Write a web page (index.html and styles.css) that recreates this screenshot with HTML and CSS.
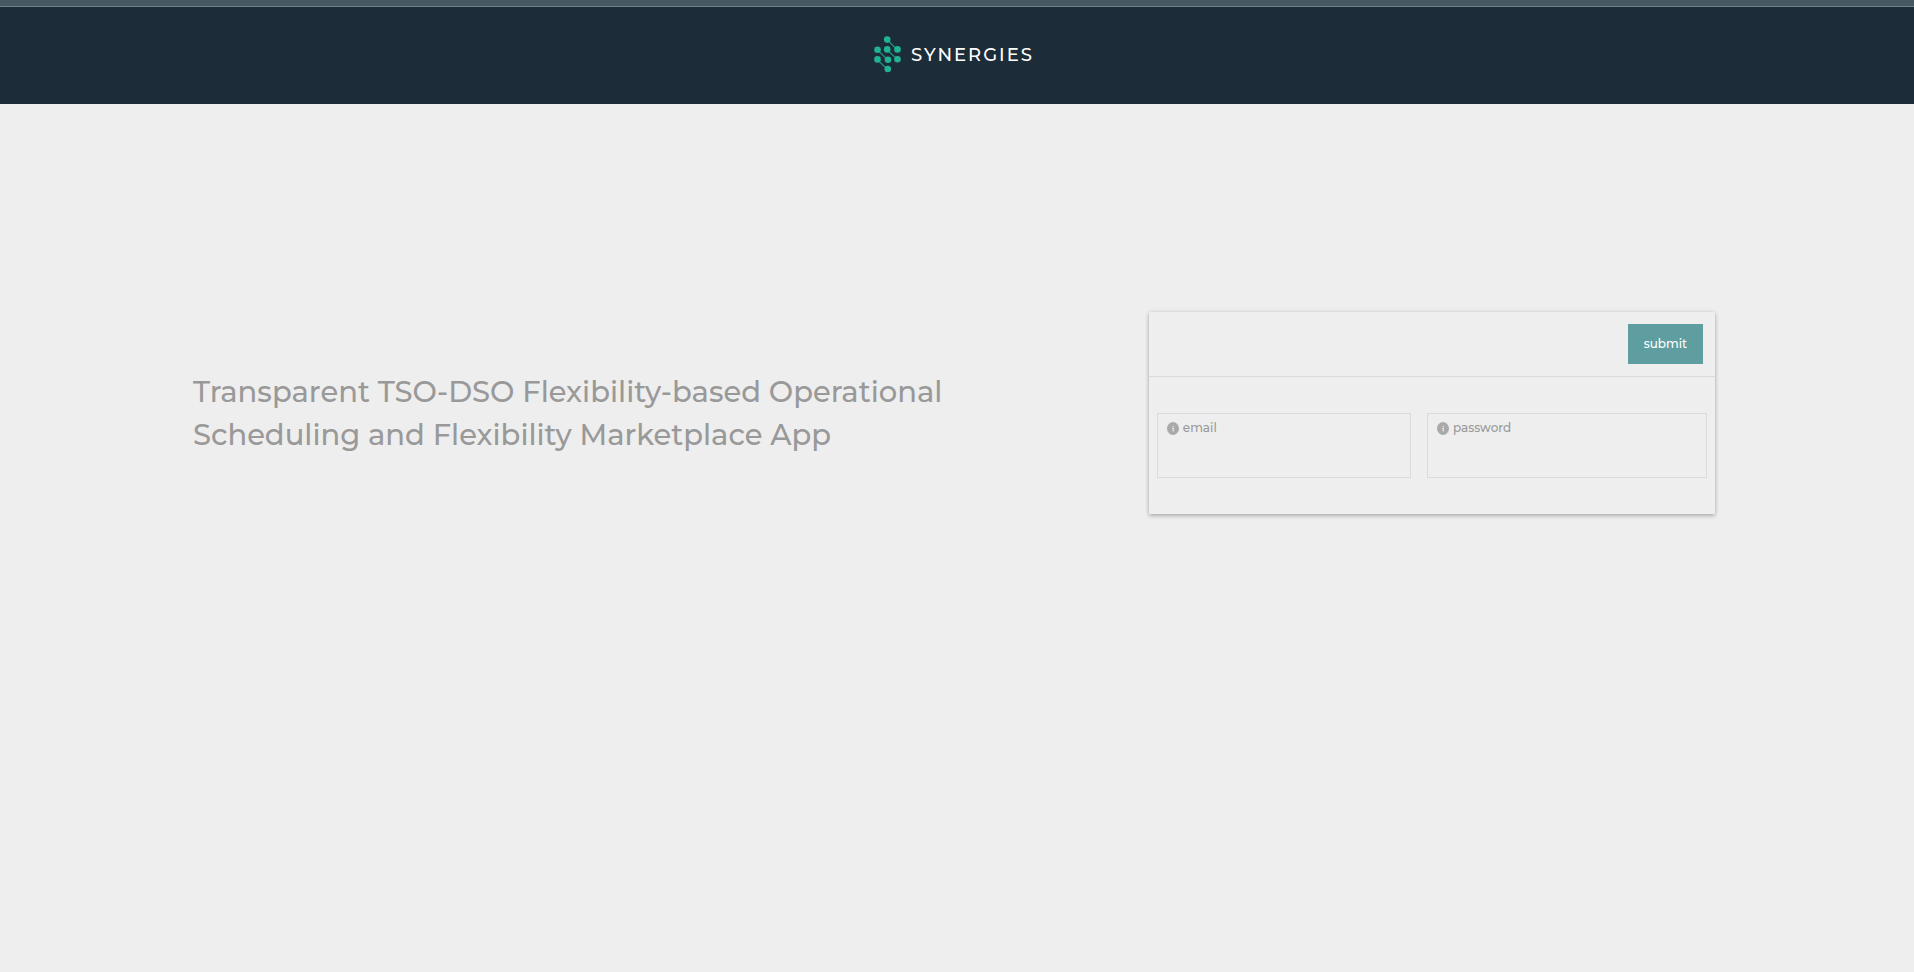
FILE: index.html
```html
<!DOCTYPE html>
<html lang="en">
<head>
<meta charset="utf-8">
<meta name="viewport" content="width=device-width, initial-scale=1">
<title>Synergies</title>
<link rel="stylesheet" href="styles.css">
</head>
<body>
<header class="topbar">
  <div class="brand">
    <svg class="brand-mark" width="28" height="38" viewBox="0 0 28 38" aria-hidden="true">
      <g stroke="#1d8f7d" stroke-width="1.3">
        <path d="M13.5 4 23.5 14M3.5 14 14 24M13.2 14 23.5 23.5M3.5 24 14 33.7"/>
      </g>
      <g fill="#20b393">
        <circle cx="13.2" cy="3.6" r="3.3"/>
        <circle cx="3.5" cy="13.8" r="3.3"/>
        <circle cx="13.2" cy="13.4" r="3.3"/>
        <circle cx="23.5" cy="13.4" r="3.3"/>
        <circle cx="3.5" cy="23.4" r="3.3"/>
        <circle cx="14" cy="23.7" r="3.3"/>
        <circle cx="23.5" cy="23.2" r="3.3"/>
        <circle cx="13.8" cy="33" r="3.3"/>
      </g>
    </svg>
    <span class="brand-name">SYNERGIES</span>
  </div>
</header>
<main class="landing">
  <h1 class="title">Transparent TSO-DSO Flexibility-based Operational<br>Scheduling and Flexibility Marketplace App</h1>
  <form class="card">
    <div class="card-head">
      <button class="submit" type="button">submit</button>
    </div>
    <div class="card-body">
      <div class="field">
        <label class="field-label" for="email">
          <svg width="12" height="13" viewBox="0 0 12 13" aria-hidden="true"><ellipse cx="6" cy="6.5" rx="6" ry="6.5" fill="#a9a9a9"/><path d="M5.6 4h1.3v1.2H5.600zM5 6h1.900v3.500H5.700V6.900H5z" fill="#e4e4e4"/></svg>
          email
        </label>
        <input class="field-input" id="email" type="email">
      </div>
      <div class="field">
        <label class="field-label" for="password">
          <svg width="12" height="13" viewBox="0 0 12 13" aria-hidden="true"><ellipse cx="6" cy="6.5" rx="6" ry="6.5" fill="#a9a9a9"/><path d="M5.6 4h1.3v1.2H5.600zM5 6h1.900v3.500H5.700V6.900H5z" fill="#e4e4e4"/></svg>
          password
        </label>
        <input class="field-input" id="password" type="password">
      </div>
    </div>
  </form>
</main>
</body>
</html>
```
FILE: styles.css
```css
*,
*::before {
  box-sizing: border-box;
}

body {
  margin: 0;
  min-height: 100vh;
  background: #eee;
  color: #999;
  font-family: Montserrat, Inter, "Open Sans", sans-serif;
  font-weight: 500;
}

.topbar {
  display: flex;
  flex-direction: column;
  background: #1c2c38;
}

.topbar::before {
  content: "";
  height: 7px;
  background: #465861;
  border-bottom: 1px solid #6f8288;
}

.brand {
  display: flex;
  align-items: center;
  justify-content: center;
  gap: 9px;
  height: 97px;
  padding: 0 6px 1px 0;
}

.brand-name {
  color: #fff;
  font-size: 18px;
  font-weight: 500;
  letter-spacing: 2px;
}

.landing {
  display: grid;
  grid-template-columns: 1fr 37.2%;
  align-items: center;
  padding: 208px 199px 40px 193px;
}

.title {
  margin: 0;
  font-size: 29px;
  font-weight: 500;
  line-height: 43px;
}

.card {
  background: #eee;
  border-radius: 1px;
  box-shadow: 0 2px 4px rgba(0, 0, 0, 0.24), 0 0 4px rgba(0, 0, 0, 0.1);
}

.card-head {
  display: flex;
  justify-content: flex-end;
  padding: 12px;
  border-bottom: 1px solid #dadada;
}

.submit {
  height: 40px;
  padding: 0 16px 2px;
  border: 0;
  background: #5f9ea0;
  color: #fff;
  font: inherit;
  font-size: 12px;
}

.card-body {
  display: grid;
  grid-template-columns: 254fr 280fr;
  gap: 16px;
  padding: 36px 8px;
}

.field {
  display: flex;
  flex-direction: column;
  min-width: 0;
  height: 65px;
  padding: 6px 9px;
  border: 1px solid #dadada;
}

.field-label {
  display: flex;
  align-items: center;
  gap: 4px;
  font-size: 12px;
  line-height: 16px;
}

.field-input {
  flex: 1;
  width: 100%;
  min-height: 0;
  padding: 0;
  border: 0;
  outline: 0;
  background: transparent;
  color: inherit;
  font: inherit;
  font-size: 12px;
}
```
